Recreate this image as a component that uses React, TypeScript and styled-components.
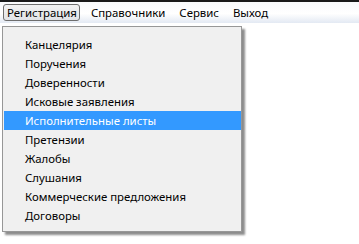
import React from 'react';
import styled, { createGlobalStyle } from 'styled-components';

const topItems = ['Регистрация', 'Справочники', 'Сервис', 'Выход'];

const subItems = [
  'Канцелярия',
  'Поручения',
  'Доверенности',
  'Исковые заявления',
  'Исполнительные листы',
  'Претензии',
  'Жалобы',
  'Слушания',
  'Коммерческие предложения',
  'Договоры',
];

function App() {
  return (
    <>
      <GlobalStyle />
      <Window>
        <TopStrip />
        <MenuBar>
          {topItems.map((t, i) => (
            <TopItem key={t} $open={i === 0}>
              {t}
            </TopItem>
          ))}
        </MenuBar>
        <Dropdown>
          {subItems.map((t) => (
            <Item key={t} $active={t === 'Исполнительные листы'}>
              {t}
            </Item>
          ))}
        </Dropdown>
      </Window>
    </>
  );
}

// Styles
const GlobalStyle = createGlobalStyle`
  html, body {
    margin: 0;
    background: #ffffff;
  }
`;

const Window = styled.div`
  position: relative;
  width: 359px;
  height: 244px;
  overflow: hidden;
  font-family: 'Noto Sans', 'Open Sans', sans-serif;
  font-size: 11.4px;
  color: #000;
`;

const TopStrip = styled.div`
  height: 2px;
  background: #1a1a1a;
`;

const MenuBar = styled.div`
  display: flex;
  align-items: center;
  gap: 7px;
  height: 21px;
  padding-left: 3px;
  background: linear-gradient(#f9fafc, #ffffff 55%, #e3e9f3);
`;

const TopItem = styled.div<{ $open?: boolean }>`
  height: 17px;
  line-height: 16px;
  padding: 0 2px 0 3px;
  box-sizing: border-box;
  border: 1px solid ${(p) => (p.$open ? '#6e6e6e' : 'transparent')};
  border-radius: 3px;
  background: ${(p) => (p.$open ? 'linear-gradient(#f2f2f2, #e2e3e6)' : 'transparent')};
`;

const Dropdown = styled.div`
  position: absolute;
  left: 2px;
  top: 26px;
  width: 240px;
  padding: 8px 0 6px 1px;
  box-sizing: border-box;
  background: #f0f0f0;
  border: 1px solid #979797;
  box-shadow: 3px 3px 2px rgba(0, 0, 0, 0.45);
`;

const Item = styled.div<{ $active?: boolean }>`
  height: 19px;
  line-height: 19px;
  padding-left: 21px;
  background: ${(p) => (p.$active ? '#3399ff' : 'transparent')};
  color: ${(p) => (p.$active ? '#ffffff' : '#000000')};
`;

export default App;
